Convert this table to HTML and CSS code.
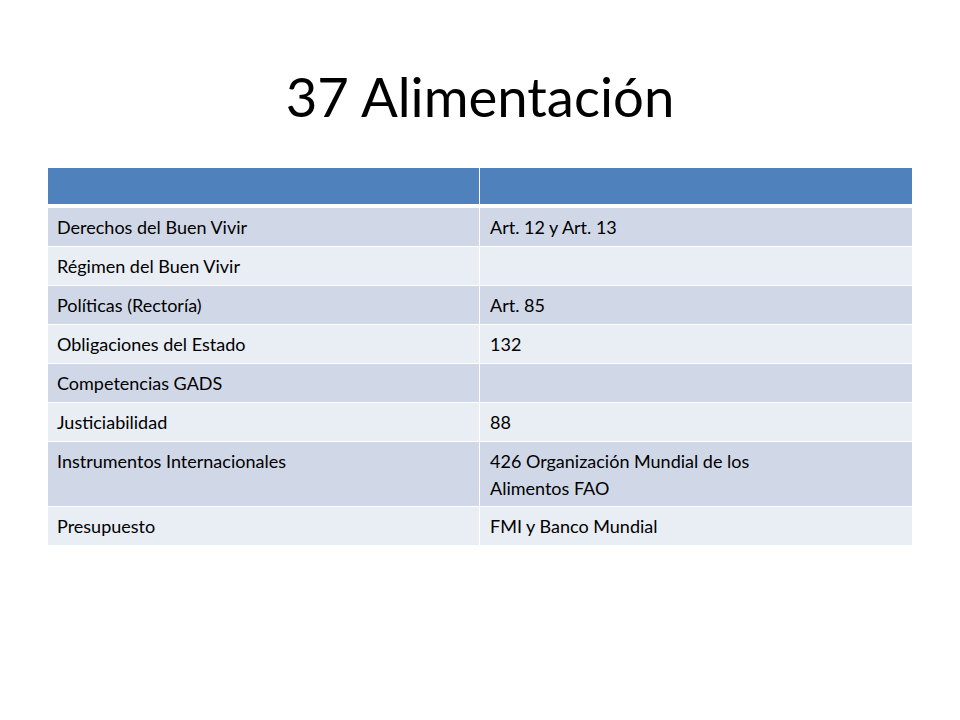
FILE: index.html
```html
<!DOCTYPE html>
<html lang="es">
<head>
<meta charset="utf-8">
<title>37 Alimentación</title>
<link rel="stylesheet" href="styles.css">
</head>
<body>
<div class="slide">
  <h1 class="title">37 Alimentación</h1>
  <div class="grid">
    <div class="cell head"></div><div class="cell head"></div>
    <div class="cell odd">Derechos del Buen Vivir</div><div class="cell odd">Art. 12 y Art. 13</div>
    <div class="cell even">Régimen del Buen Vivir</div><div class="cell even"></div>
    <div class="cell odd">Políticas (Rectoría)</div><div class="cell odd">Art. 85</div>
    <div class="cell even">Obligaciones del Estado</div><div class="cell even">132</div>
    <div class="cell odd">Competencias GADS</div><div class="cell odd"></div>
    <div class="cell even">Justiciabilidad</div><div class="cell even">88</div>
    <div class="cell odd tall">Instrumentos Internacionales</div><div class="cell odd tall">426 Organización Mundial de los<br>Alimentos FAO</div>
    <div class="cell even">Presupuesto</div><div class="cell even">FMI y Banco Mundial</div>
  </div>
</div>
</body>
</html>
```

FILE: styles.css
```css
html, body {
  margin: 0;
  padding: 0;
  background: #ffffff;
}
.slide {
  width: 960px;
  height: 720px;
  font-family: Lato, "Liberation Sans", sans-serif;
  color: #000;
  display: flex;
  flex-direction: column;
  align-items: center;
}
.title {
  margin: 63px 0 0 0;
  height: 105px;
  font-weight: 400;
  font-size: 54.5px;
  line-height: 66px;
  text-align: center;
  letter-spacing: 0;
}
.grid {
  width: 864px;
  display: grid;
  grid-template-columns: 431px 432px;
  grid-template-rows: 39px repeat(6, 38px) 64px 38px;
  column-gap: 1px;
  row-gap: 1px;
  background: #ffffff;
  font-size: 18px;
}
.cell {
  box-sizing: border-box;
  padding: 0 9px;
  display: flex;
  align-items: center;
  line-height: 27px;
}
.cell:nth-child(even) { padding-left: 10px; }
.head {
  background: #4f81bd;
  margin-bottom: 3px;
}
.odd { background: #d0d8e8; }
.even { background: #e9edf4; }
.tall {
  align-items: flex-start;
  padding-top: 6px;
}
```
